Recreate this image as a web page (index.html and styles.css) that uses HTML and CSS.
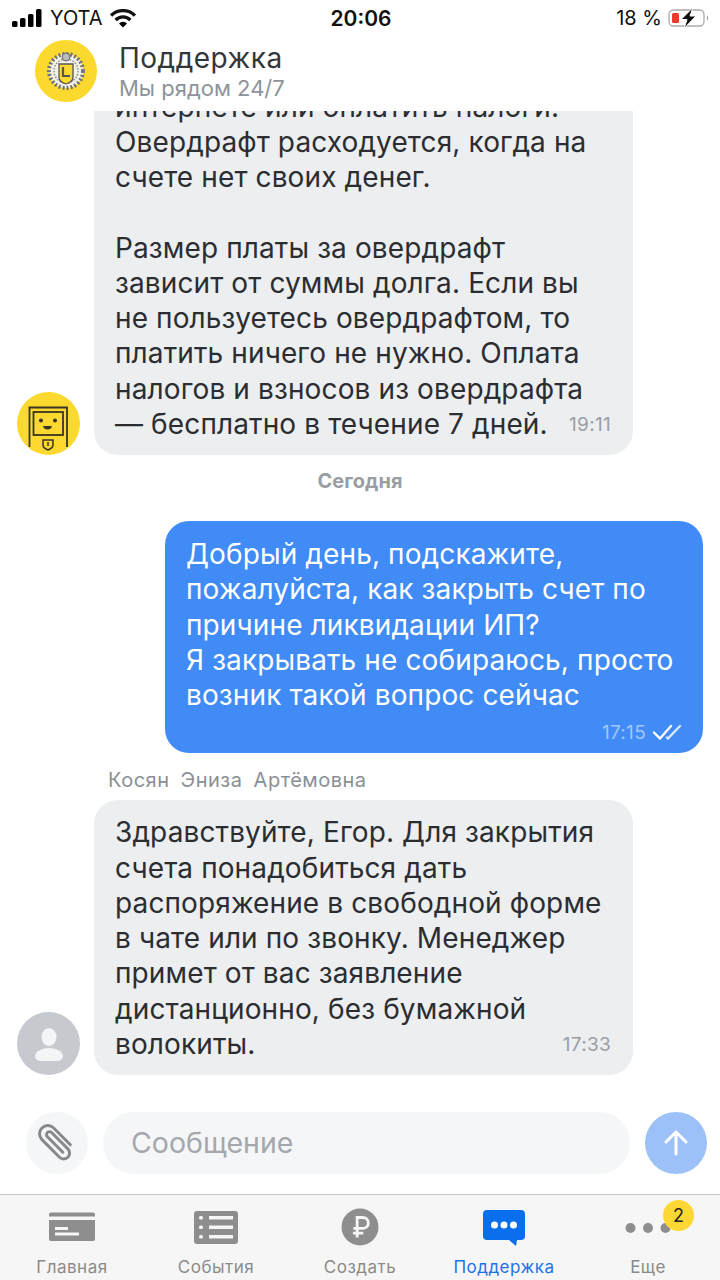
FILE: index.html
```html
<!DOCTYPE html>
<html lang="ru">
<head>
    <meta charset="UTF-8">
    <title>Поддержка</title>
    <link rel="stylesheet" href="styles.css">
</head>
<body>
    <div class="screen">
        <div class="status-bar">
            <div class="status-left">
                <svg width="31" height="18" viewBox="0 0 31 18"><rect x="0" y="12" width="5.5" height="6" rx="1.5"/><rect x="8" y="9" width="5.5" height="9" rx="1.5"/><rect x="16" y="5" width="5.5" height="13" rx="1.5"/><rect x="24" y="0" width="5.5" height="18" rx="1.5"/></svg>
                <span>YOTA</span>
                <svg width="26" height="19" viewBox="0 0 26 19"><path d="M1 6.5a17 17 0 0 1 24 0" fill="none" stroke="#111" stroke-width="3.2"/><path d="M5.6 11a10.5 10.5 0 0 1 14.8 0" fill="none" stroke="#111" stroke-width="3.2"/><path d="M9 14.4a5.5 5.5 0 0 1 8 0L13 18.6z"/></svg>
            </div>
            <div class="status-time">20:06</div>
            <div class="status-right">
                <span>18 %</span>
                <svg width="42" height="22" viewBox="0 0 42 22"><rect x="1" y="3" width="35" height="16" rx="4.5" fill="none" stroke="#aaa" stroke-width="1.3"/><rect x="4" y="6" width="7" height="10" rx="1.5" fill="#f0392b"/><path d="M39 8.500c1.500.6 1.500 4.400 0 5z" fill="#999"/><path d="M25 0.500 13 12.500h6l-3 9 12-12.500h-6z" fill="#111" stroke="#fff" stroke-width="1"/></svg>
            </div>
        </div>

        <div class="chat-header">
            <div class="logo">
                <svg width="44" height="44" viewBox="0 0 44 44">
                    <circle cx="22" cy="22" r="17" fill="#f4f2e4" stroke="#6f7480" stroke-width="4" stroke-dasharray="2 2"/>
                    <circle cx="22" cy="22" r="12" fill="none" stroke="#8b8f96" stroke-width="1.500" stroke-dasharray="1.500 1.500"/>
                    <circle cx="22" cy="8" r="4" fill="#b9bbb9" stroke="#666" stroke-width="1"/>
                    <path d="M15 15h14v13q0 5-7 7-7-2-7-7z" fill="#fbd92f" stroke="#555" stroke-width="1.300"/>
                    <path d="M19 18v9h7" fill="none" stroke="#555" stroke-width="2.200"/>
                </svg>
            </div>
            <div>
                <div class="chat-title">Поддержка</div>
                <div class="chat-subtitle">Мы рядом 24/7</div>
            </div>
        </div>

        <div class="messages">
            <div class="row">
                <div class="avatar avatar-bot">
                    <svg width="63" height="63" viewBox="0 0 63 63" fill="none" stroke="#3a3423">
                        <path d="M12.500 55V15.500h37.500V55" stroke-width="1.800"/>
                        <rect x="16.500" y="20" width="29.500" height="23" stroke-width="1.800"/>
                        <circle cx="24" cy="28.500" r="2" fill="#3a3423" stroke="none"/>
                        <circle cx="38" cy="28.500" r="2" fill="#3a3423" stroke="none"/>
                        <path d="M26 34h9q-1 3.500-4.500 3.500T26 34z" fill="#3a3423" stroke="none"/>
                        <path d="M26 48h10v5q0 3-5 5-5-2-5-5z" stroke-width="1.500"/>
                        <path d="M31 50v4" stroke-width="1.500"/>
                    </svg>
                </div>
                <div class="bubble">
                    интернете или оплатить налоги.<br>
                    Овердрафт расходуется, когда на<br>
                    счете нет своих денег.<br>
                    <br>
                    Размер платы за овердрафт<br>
                    зависит от суммы долга. Если вы<br>
                    не пользуетесь овердрафтом, то<br>
                    платить ничего не нужно. Оплата<br>
                    налогов и взносов из овердрафта
                    <div class="last-line">
                        <span>— бесплатно в течение 7 дней.</span>
                        <span class="time">19:11</span>
                    </div>
                </div>
            </div>

            <div class="day">Сегодня</div>

            <div class="bubble bubble-own">
                Добрый день, подскажите,<br>
                пожалуйста, как закрыть счет по<br>
                причине ликвидации ИП?<br>
                Я закрывать не собираюсь, просто<br>
                возник такой вопрос сейчас
                <div class="own-meta">
                    <span class="time">17:15</span>
                    <svg width="30" height="16" viewBox="0 0 30 16" fill="none" stroke-width="2.400" stroke-linecap="round">
                        <path d="M2 8.500l6 6L19 2" stroke="#fff"/>
                        <path d="M15 13.500l1 1L28 2" stroke="#dbe8fd"/>
                    </svg>
                </div>
            </div>

            <div class="sender">Косян Эниза Артёмовна</div>
            <div class="row">
                <div class="avatar avatar-person">
                    <svg width="63" height="63" viewBox="0 0 63 63" fill="#f4f5f6">
                        <ellipse cx="32" cy="25" rx="7.500" ry="9"/>
                        <path d="M18 44c0-5 8-8 14-8s14 3 14 8c0 3-3 5-6 5H24c-3 0-6-2-6-5z"/>
                    </svg>
                </div>
                <div class="bubble">
                    Здравствуйте, Егор. Для закрытия<br>
                    счета понадобиться дать<br>
                    распоряжение в свободной форме<br>
                    в чате или по звонку. Менеджер<br>
                    примет от вас заявление<br>
                    дистанционно, без бумажной
                    <div class="last-line">
                        <span>волокиты.</span>
                        <span class="time">17:33</span>
                    </div>
                </div>
            </div>
        </div>

        <div class="composer">
            <div class="attach">
                <svg width="52" height="52" viewBox="0 0 44 44" fill="none" stroke="#85888c" stroke-width="2.500" stroke-linecap="round">
                    <path d="M29 31V11a7 7 0 0 0-14 0v21a5 5 0 0 0 10 0V12.500a2.500 2.500 0 0 0-5 0V31" transform="rotate(-45 22 22)"/>
                </svg>
            </div>
            <div class="input">Сообщение</div>
            <div class="send">
                <svg width="30" height="30" viewBox="0 0 30 30" fill="none" stroke="#fff" stroke-width="3" stroke-linecap="round" stroke-linejoin="round"><path d="M15 26V4M5 14 15 4l10 10"/></svg>
            </div>
        </div>

        <div class="tabbar">
            <div class="tab">
                <svg width="46" height="34" viewBox="0 0 46 34" fill="#8e8e8e"><path d="M2 2.500h42a2 2 0 0 1 2 2v2H0v-2a2 2 0 0 1 2-2z"/><path d="M0 10h46v19a2 2 0 0 1-2 2H2a2 2 0 0 1-2-2z"/><rect x="6" y="17" width="13" height="3" fill="#f6f6f6"/><rect x="6" y="22.500" width="24" height="3" fill="#f6f6f6"/></svg>
                <span>Главная</span>
            </div>
            <div class="tab">
                <svg width="44" height="34" viewBox="0 0 44 34"><rect y="1" width="44" height="33" rx="3" fill="#8e8e8e"/><g fill="#f6f6f6"><rect x="5" y="6" width="4" height="3.500" rx="1.500"/><rect x="5" y="15.500" width="4" height="3.500" rx="1.500"/><rect x="5" y="25" width="4" height="3.500" rx="1.500"/><rect x="15" y="6" width="24" height="3.500"/><rect x="15" y="15.500" width="24" height="3.500"/><rect x="15" y="25" width="24" height="3.500"/></g></svg>
                <span>События</span>
            </div>
            <div class="tab">
                <svg width="40" height="40" viewBox="0 0 40 40" class="icon-tall"><circle cx="20" cy="20" r="19.500" fill="#8e8e8e"/><path d="M17 31V10h6a5.500 5.500 0 0 1 0 11.500h-10M12.500 26.500h11" fill="none" stroke="#f6f6f6" stroke-width="3"/></svg>
                <span>Создать</span>
            </div>
            <div class="tab tab-active">
                <svg width="44" height="38" viewBox="0 0 44 38" class="icon-chat"><path d="M5 1h34a4 4 0 0 1 4 4v22a4 4 0 0 1-4 4h-4l-1 6-7-6H5a4 4 0 0 1-4-4V5a4 4 0 0 1 4-4z" fill="#0a6fec"/><circle cx="12.500" cy="16" r="3.500" fill="#fff"/><circle cx="22" cy="16" r="3.500" fill="#fff"/><circle cx="31.500" cy="16" r="3.500" fill="#fff"/></svg>
                <span>Поддержка</span>
            </div>
            <div class="tab">
                <svg width="46" height="34" viewBox="0 0 46 34" fill="#8e8e8e"><circle cx="5.500" cy="18" r="5"/><circle cx="23" cy="18" r="5"/><circle cx="40.500" cy="18" r="5"/></svg>
                <span>Еще</span>
                <div class="badge">2</div>
            </div>
        </div>
    </div>
</body>
</html>
```

FILE: styles.css
```css
* {
    box-sizing: border-box;
}
body {
    margin: 0;
    font-family: Inter, "Noto Sans", sans-serif;
    background-color: #fff;
    color: #2b2d30;
}
.screen {
    width: 720px;
    height: 1280px;
    display: flex;
    flex-direction: column;
    overflow: hidden;
}
.status-bar {
    height: 38px;
    flex: none;
    display: grid;
    grid-template-columns: 1fr auto 1fr;
    align-items: center;
    padding: 0 10px 2px 12px;
    font-size: 20px;
    color: #111;
}
.status-left {
    display: flex;
    align-items: center;
    gap: 7px;
}
.status-time {
    font-weight: 600;
    font-size: 21px;
}
.status-right {
    display: flex;
    justify-content: flex-end;
    align-items: center;
    gap: 6px;
}
.chat-header {
    height: 73px;
    flex: none;
    display: flex;
    align-items: flex-start;
    gap: 22px;
    padding: 2px 0 0 35px;
    background-color: #fff;
}
.logo {
    width: 62px;
    height: 62px;
    border-radius: 50%;
    background-color: #fbd92f;
    display: flex;
    align-items: center;
    justify-content: center;
}
.chat-title {
    font-size: 28px;
    line-height: 34px;
    letter-spacing: 0.5px;
    margin-top: 1px;
    color: #33363a;
}
.chat-subtitle {
    font-size: 22px;
    line-height: 26px;
    color: #8d9398;
}
.messages {
    flex: 1;
    min-height: 0;
    overflow: hidden;
    display: flex;
    flex-direction: column;
    justify-content: flex-end;
    padding: 0 17px 19px;
}
.row {
    display: flex;
    align-items: flex-end;
    gap: 14px;
}
.avatar {
    width: 63px;
    height: 63px;
    flex: none;
    border-radius: 50%;
    overflow: hidden;
}
.avatar svg {
    display: block;
}
.avatar-bot {
    background-color: #fbd92f;
}
.avatar-person {
    background-color: #c6c9cd;
}
.bubble {
    width: 539px;
    flex: none;
    padding: 15px 21px 13px;
    border-radius: 24px;
    background-color: #eceef0;
    font-size: 28px;
    line-height: 35.25px;
    letter-spacing: 0.12px;
    color: #2b2d30;
}
.bubble-own {
    align-self: flex-end;
    width: 538px;
    padding-top: 16px;
    padding-bottom: 9px;
    background-color: #408bf6;
    color: #fff;
}
.last-line {
    display: flex;
    justify-content: space-between;
    align-items: center;
}
.time {
    font-size: 19px;
    letter-spacing: 0.3px;
    color: #9a9ea3;
    margin-right: 1px;
}
.own-meta {
    display: flex;
    justify-content: flex-end;
    align-items: center;
    gap: 6px;
    height: 24px;
    margin-top: 7px;
}
.own-meta .time {
    color: #a3c6fa;
    margin-right: 0;
}
.day {
    text-align: center;
    font-size: 20px;
    font-weight: 700;
    line-height: 24px;
    color: #9a9ea3;
    margin: 14px 0 28px;
}
.sender {
    margin: 15px 0 8px 91px;
    font-size: 20px;
    line-height: 24px;
    letter-spacing: 0.5px;
    word-spacing: 5px;
    color: #8a8f95;
}
.composer {
    height: 100px;
    flex: none;
    display: flex;
    gap: 15px;
    padding: 18px 13px 0 26px;
}
.attach,
.send {
    width: 62px;
    height: 62px;
    flex: none;
    border-radius: 50%;
    display: flex;
    align-items: center;
    justify-content: center;
}
.attach {
    background-color: #f5f6f7;
}
.input {
    flex: 1;
    height: 62px;
    border-radius: 31px;
    background-color: #f5f6f7;
    padding-left: 28px;
    font-size: 28.5px;
    line-height: 62px;
    color: #a4a8ac;
}
.send {
    background-color: #9cc1f8;
}
.tabbar {
    height: 86px;
    flex: none;
    display: grid;
    grid-template-columns: repeat(5, 1fr);
    background-color: #f6f6f6;
    border-top: 1px solid #c9c9cb;
}
.tab {
    position: relative;
    display: flex;
    flex-direction: column;
    align-items: center;
    padding-top: 15px;
    font-size: 17px;
    letter-spacing: 0.5px;
    color: #8a8a8a;
}
.tab svg {
    height: 34px;
    margin-bottom: 13px;
}
.tab .icon-tall {
    height: 38px;
    margin: -2px 0 11px;
}
.tab .icon-chat {
    height: 38px;
    margin: -1px 0 10px;
}
.tab-active {
    color: #1a73e8;
}
.badge {
    position: absolute;
    top: 5px;
    left: 87px;
    width: 31px;
    height: 31px;
    border-radius: 50%;
    background-color: #fdd835;
    color: #222;
    font-size: 18px;
    line-height: 31px;
    text-align: center;
    letter-spacing: 0;
}
```
